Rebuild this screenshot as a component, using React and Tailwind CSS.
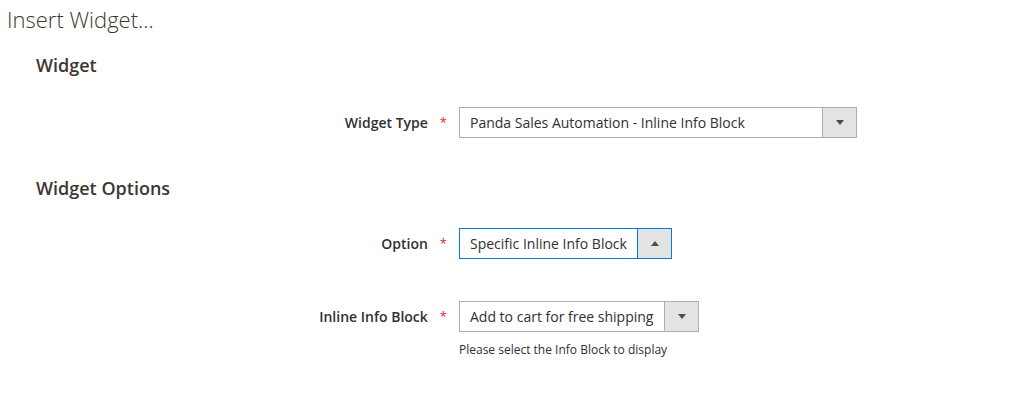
import { useState } from "react";

function Arrow({ up }) {
  return (
    <svg width="8" height="5" viewBox="0 0 8 5" className="block">
      {up ? (
        <path d="M0 5 L4 0 L8 5 Z" fill="#514943" />
      ) : (
        <path d="M0 0 L8 0 L4 5 Z" fill="#514943" />
      )}
    </svg>
  );
}

function SelectBox({ value, width, focused }) {
  const border = focused ? "border-[#007bdb]" : "border-[#adadad]";
  return (
    <div
      className={`flex h-[31px] border bg-white ${border} ${width}`}
    >
      <div className="flex flex-1 items-center pl-[10px] pr-[10px] text-[14px] text-[#303030] whitespace-nowrap">
        {value}
      </div>
      <div
        className={`flex w-[34px] items-center justify-center border-l bg-[#e3e3e3] ${border}`}
      >
        <Arrow up={focused} />
      </div>
    </div>
  );
}

function Field({ label, children, note }) {
  return (
    <div className="grid grid-cols-[411px_1fr] gap-x-[12px]">
      <div className="flex h-[31px] items-center justify-end text-[14px] font-semibold text-[#303030]">
        <span>{label}</span>
        <span className="ml-[12px] text-[13px] font-normal text-[#e22626]">*</span>
      </div>
      <div>
        {children}
        {note && (
          <div className="mt-[9px] text-[12px] text-[#303030]">{note}</div>
        )}
      </div>
    </div>
  );
}

export default function App() {
  const [widgetType] = useState("Panda Sales Automation - Inline Info Block");

  return (
    <div
      className="h-[415px] w-[1019px] bg-white"
      style={{ fontFamily: '"Open Sans", sans-serif' }}
    >
      <h1 className="pl-[7px] pt-[4px] text-[22px] font-light leading-[30px] text-[#41362f]">
        Insert Widget...
      </h1>

      <div className="pl-[36px]">
        <h2 className="mt-[19px] text-[18px] font-semibold leading-[24px] text-[#41362f]">
          Widget
        </h2>
        <div className="mt-[30px]">
          <Field label="Widget Type">
            <SelectBox value={widgetType} width="w-[398px]" />
          </Field>
        </div>

        <h2 className="mt-[38px] text-[18px] font-semibold leading-[24px] text-[#41362f]">
          Widget Options
        </h2>
        <div className="mt-[28px] flex flex-col gap-[42px]">
          <Field label="Option">
            <SelectBox value="Specific Inline Info Block" width="w-[213px]" focused />
          </Field>
          <Field label="Inline Info Block" note="Please select the Info Block to display">
            <SelectBox value="Add to cart for free shipping" width="w-[240px]" />
          </Field>
        </div>
      </div>
    </div>
  );
}
